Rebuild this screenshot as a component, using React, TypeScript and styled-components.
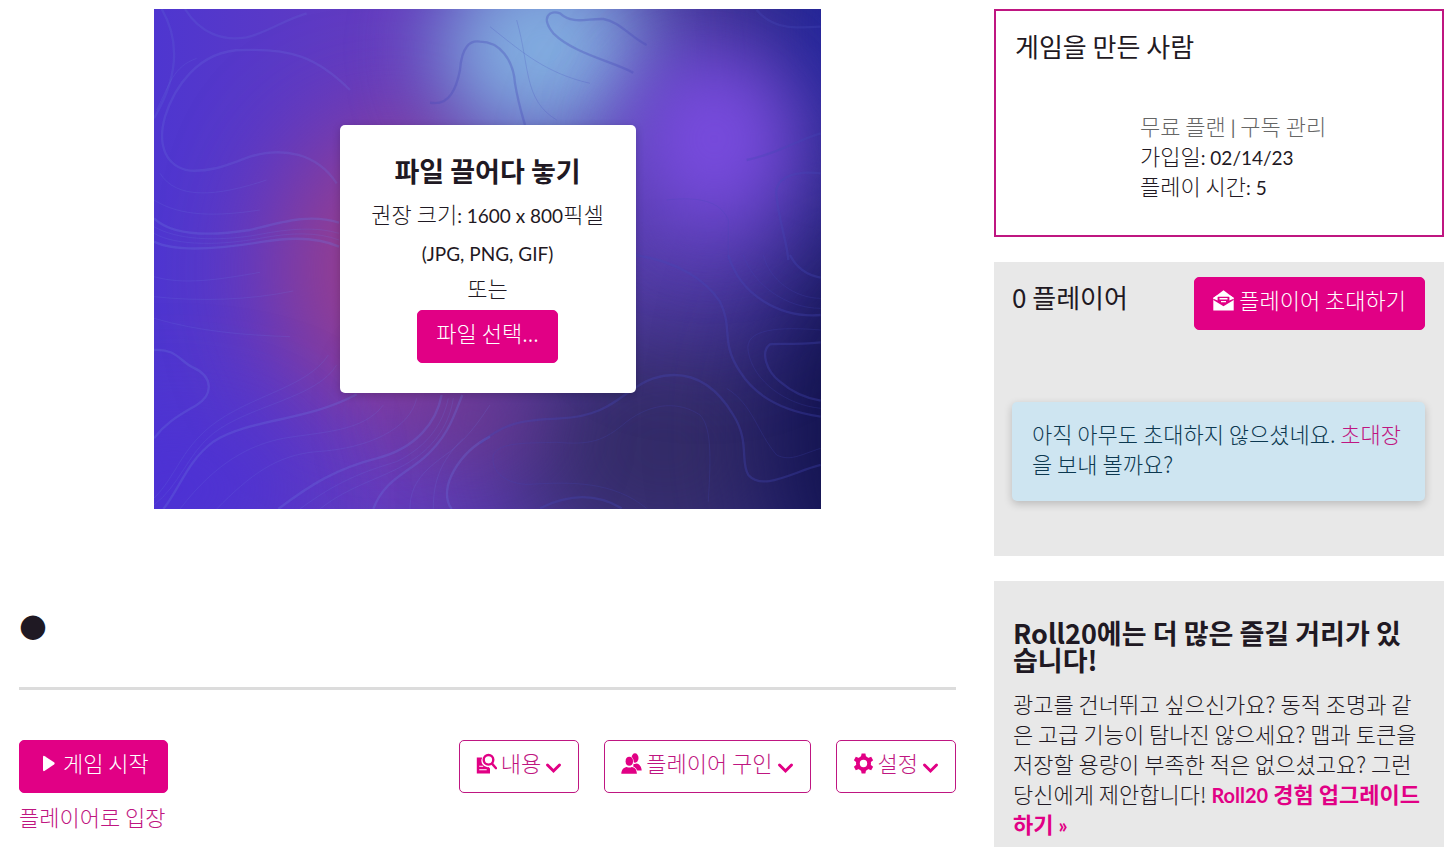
import React from 'react';
import styled, { createGlobalStyle, css } from 'styled-components';

const PINK = '#e10085';
const LINE = '#bf1681';
const INK = '#1f1923';

const GlobalStyle = createGlobalStyle`
  *, *::before, *::after { box-sizing: border-box; }
  body {
    margin: 0;
    background: #fff;
    color: ${INK};
    font-family: "Noto Sans CJK KR", sans-serif;
    font-size: 22px;
    font-weight: 300;
    line-height: 30px;
  }
  h1, h2, h3, p { margin: 0; }
`;

const Page = styled.div`
  display: grid;
  grid-template-columns: minmax(0, 1fr) 450px;
  column-gap: 38px;
  align-items: start;
  padding: 9px 9px 0 19px;
`;

const Latin = styled.span<{ $bold?: boolean }>`
  font-family: Lato, "Noto Sans CJK KR", sans-serif;
  font-size: ${({ $bold }) => ($bold ? 20 : 19)}px;
  font-weight: ${({ $bold }) => ($bold ? 700 : 400)};
  line-height: 1;
`;

const Main = styled.main`
  display: flex;
  flex-direction: column;
`;

const Hero = styled.section`
  display: grid;
  place-items: center;
  width: 100%;
  max-width: 667px;
  min-height: 500px;
  margin: 0 auto;
  overflow: hidden;
  background: #4d30d0;

  & > * { grid-area: 1 / 1; }
`;

const HeroArt = styled.svg`
  display: block;
  width: 100%;
  height: 500px;
`;

const DropCard = styled.div`
  position: relative;
  display: flex;
  flex-direction: column;
  align-items: center;
  width: 296px;
  padding: 28px 16px 30px;
  border-radius: 5px;
  background: #fff;
  box-shadow: 0 2px 8px rgba(0, 0, 0, 0.2);
  text-align: center;
`;

const DropTitle = styled.h2`
  font-size: 27px;
  font-weight: 700;
  line-height: 36px;
  margin-bottom: 5px;
`;

const DropHint = styled.p`
  height: 38px;
  line-height: 38px;
  white-space: nowrap;
`;

const DropOr = styled.p`
  margin-bottom: 6px;
  line-height: 34px;
`;

const buttonBase = css`
  display: inline-flex;
  align-items: center;
  height: 53px;
  padding: 0 18px 10px;
  border: 1px solid ${PINK};
  border-radius: 5px;
  font: inherit;
  white-space: nowrap;
  cursor: pointer;
`;

const SolidButton = styled.button`
  ${buttonBase}
  gap: 5px;
  background: ${PINK};
  color: #fff;
`;

const OutlineButton = styled.button`
  ${buttonBase}
  gap: 4px;
  padding: 0 16px 10px;
  border-color: ${LINE};
  background: #fff;
  color: ${LINE};
`;

const Icon = styled.svg<{ $w?: number }>`
  flex: none;
  display: block;
  width: ${({ $w }) => $w ?? 21}px;
  height: 21px;
  margin-top: 4px;
  fill: ${({ color }) => color ?? 'currentColor'};
`;

const Chevron = styled.svg`
  flex: none;
  align-self: flex-end;
  width: 17px;
  height: 12px;
  margin-bottom: 8px;
  fill: none;
  stroke: ${PINK};
  stroke-width: 3;
  stroke-linecap: round;
`;

const GameTitle = styled.h1`
  margin-top: 86px;
  padding-bottom: 32px;
  border-bottom: 3px solid #dcdcdc;
  font-family: "DejaVu Sans", sans-serif;
  font-size: 32px;
  line-height: 60px;
`;

const Toolbar = styled.div`
  display: flex;
  justify-content: space-between;
  align-items: flex-start;
  margin-top: 50px;
`;

const LaunchGroup = styled.div`
  display: flex;
  flex-direction: column;
  align-items: flex-start;
  gap: 8px;
`;

const MenuGroup = styled.div`
  display: flex;
  gap: 25px;
`;

const PinkLink = styled.a<{ $strong?: boolean }>`
  color: ${({ $strong }) => ($strong ? PINK : LINE)};
  font-weight: ${({ $strong }) => ($strong ? 700 : 'inherit')};
  text-decoration: none;
`;

const Sidebar = styled.aside`
  display: flex;
  flex-direction: column;
  gap: 25px;
`;

const OwnerPanel = styled.section`
  min-height: 228px;
  padding: 17px 19px;
  border: 2px solid ${LINE};
`;

const PanelTitle = styled.h2`
  font-size: 26px;
  font-weight: 400;
  line-height: 36px;
`;

const OwnerFacts = styled.div`
  margin: 46px 0 0 125px;
`;

const Plan = styled.p`
  color: #666;

  a { color: inherit; text-decoration: none; }
`;

const GreyPanel = styled.section`
  padding: 15px 19px 55px 18px;
  background: #e8e8e8;
`;

const PlayersHead = styled.div`
  display: flex;
  justify-content: space-between;
  align-items: flex-start;

  h2 { margin-top: 2px; }
`;

const Notice = styled.p`
  margin-top: 72px;
  min-height: 99px;
  padding: 16px 20px 23px;
  border-radius: 5px;
  background: #cee5f1;
  box-shadow: 0 3px 8px rgba(0, 0, 0, 0.2);
  color: #0c3850;
`;

const PromoPanel = styled.section`
  padding: 38px 19px 9px;
  background: #e8e8e8;
`;

const PromoTitle = styled.h3`
  margin-bottom: 15px;
  font-size: 27px;
  font-weight: 700;
  line-height: 27px;
`;

function Backdrop() {
  return (
    <HeroArt viewBox="0 0 667 500" preserveAspectRatio="xMidYMid slice" aria-hidden="true">
      <defs>
        <linearGradient id="base" x1="0" y1="0" x2="1" y2="0">
          <stop offset="0" stopColor="#4e36d0" />
          <stop offset="0.35" stopColor="#643cbe" />
          <stop offset="0.7" stopColor="#503ca4" />
          <stop offset="1" stopColor="#282884" />
        </linearGradient>
        <filter id="wide" filterUnits="userSpaceOnUse" x="-300" y="-300" width="1300" height="1100" colorInterpolationFilters="sRGB">
          <feGaussianBlur stdDeviation="54" />
        </filter>
        <filter id="soft" filterUnits="userSpaceOnUse" x="-300" y="-300" width="1300" height="1100" colorInterpolationFilters="sRGB">
          <feGaussianBlur stdDeviation="42" />
        </filter>
      </defs>
      <rect width="667" height="500" fill="url(#base)" />
      <ellipse cx="235" cy="260" rx="110" ry="140" fill="#983e8c" filter="url(#wide)" />
      <ellipse cx="510" cy="440" rx="150" ry="125" fill="#342c68" filter="url(#wide)" />
      <ellipse cx="320" cy="410" rx="75" ry="40" fill="#703a88" fillOpacity="0.8" filter="url(#soft)" />
      <ellipse cx="715" cy="420" rx="100" ry="190" fill="#12124c" filter="url(#wide)" />
      <ellipse cx="700" cy="20" rx="60" ry="110" fill="#2426a0" filter="url(#soft)" />
      <ellipse cx="390" cy="40" rx="105" ry="95" fill="#82aee0" filter="url(#soft)" />
      <ellipse cx="550" cy="190" rx="100" ry="130" fill="#6a46c4" fillOpacity="0.5" filter="url(#wide)" />
      <ellipse cx="560" cy="130" rx="80" ry="90" fill="#7a4ce0" filter="url(#soft)" />
      <ellipse cx="20" cy="480" rx="120" ry="60" fill="#4c30d6" filter="url(#wide)" />
      <g fill="none" stroke="#6c78e0" strokeOpacity="0.28" strokeWidth="7">
        <g transform="translate(-4 -9) scale(.3333)">
          <path strokeOpacity="0.18" d="M35 27C95 130 80 240 12 355M105 27C150 100 220 125 290 112C360 95 400 60 470 40" />
          <path strokeOpacity="0.22" d="M560 550C500 460 400 440 300 470C230 495 190 515 120 512C50 500 20 440 45 350C70 270 140 150 280 150C420 145 500 170 600 270" />
          <path d="M12 655C60 700 160 712 300 690C400 665 480 640 567 668M12 725C80 760 220 745 340 725C420 712 500 710 567 740" />
          <path strokeWidth="2" d="M12 680C80 720 200 725 320 705C420 685 500 680 567 700M12 700C80 740 220 735 330 715C420 698 500 695 567 720M30 520C80 600 200 590 350 540M12 600C90 650 200 650 330 630M20 330C60 250 70 200 140 175" />
        </g>
        <g transform="translate(-4 246) scale(.3333)">
          <path d="M12 285C80 280 90 320 130 338C190 365 190 420 140 450C90 480 50 500 12 550M40 762C90 700 110 620 190 560C300 490 470 500 620 418" />
          <path d="M385 762C480 690 560 640 680 610C800 580 860 500 875 420M670 762C700 680 760 660 820 610C890 550 910 490 937 420M1020 545C930 590 860 700 905 762" />
          <path strokeWidth="2" d="M90 762C200 620 300 570 400 550C520 530 640 530 700 450M200 762C300 660 380 600 500 590C660 580 780 520 800 430M12 750C90 690 110 600 190 535C300 450 500 430 560 330M12 730C80 660 90 590 180 515C300 420 470 400 535 300M450 762C560 680 640 650 740 620C840 570 880 500 895 430M510 762C600 690 700 670 780 620C860 570 900 500 910 430M780 762C780 680 830 640 900 590C950 550 980 510 1020 450M850 762C850 680 870 620 940 550M12 65C100 90 200 75 330 52M12 125C150 140 300 135 430 108M12 190C150 230 280 240 420 245" />
        </g>
      </g>
      <g fill="none" stroke="#4448b8" strokeOpacity="0.32" strokeWidth="7">
        <g transform="translate(326 -9) scale(.3333)">
          <path d="M-150 308C-90 320 -70 260 -60 210C-55 140 -30 120 0 125C60 125 100 180 105 250C115 310 125 340 135 375" />
          <path d="M460 218C400 185 280 160 220 100C180 50 210 30 240 40C280 75 320 55 370 57C420 65 450 110 500 135" />
          <path d="M830 30C880 90 950 85 1022 80M1022 520C930 510 880 540 890 590C900 680 920 720 925 780M1022 400C950 420 900 460 800 480" />
          <path strokeWidth="2" d="M110 60C150 200 130 300 230 360M30 80C130 160 200 220 330 250M745 780V660C720 600 650 590 560 600" />
        </g>
        <g transform="translate(326 246) scale(.3333)">
          <path d="M0 565C80 500 130 495 240 490C400 485 430 400 520 370C620 340 700 380 760 480C810 560 780 620 805 660C850 710 940 650 1022 630" />
          <path d="M465 0C600 20 680 80 720 140C760 220 720 260 780 350C830 430 920 470 1022 485M745 0C780 120 900 190 1022 180M930 0C950 40 980 60 1022 68" />
          <path d="M1022 262C940 270 900 265 870 268C840 290 860 350 900 380C940 415 980 430 1022 437M180 760C270 715 350 715 425 760" />
          <path strokeWidth="2" d="M440 500C520 440 600 440 660 480C700 520 690 640 685 740M440 500C370 560 330 570 230 562C140 565 60 560 40 600C30 650 80 690 150 688C280 680 400 680 500 760M1022 580C960 600 930 620 890 600C830 530 820 450 740 400M1022 225C900 215 790 220 805 290C820 380 920 450 1022 460M790 0C820 90 920 160 1022 160M850 0C870 80 950 130 1022 130" />
        </g>
      </g>
    </HeroArt>
  );
}

function PlayIcon() {
  return (
    <Icon $w={20} viewBox="0 0 20 21" aria-hidden="true">
      <path d="M5 4.200Q5 2.200 6.800 3.200L16 9.300Q17.300 10.400 16 11.500L6.800 17.800Q5 18.800 5 16.800Z" />
    </Icon>
  );
}

function ContentIcon() {
  return (
    <Icon viewBox="0 0 21 21" color={PINK} aria-hidden="true">
      <path d="M.8 4.500h5.500a6.400 6.400 0 0 0 6.300 9.600l1.400 1.500v5H.8z" />
      <path d="M3.200 13.200h4M3.200 16.700h7.500" fill="none" stroke="#fff" strokeWidth="1.100" />
      <circle cx="12.500" cy="6.800" r="6.600" fill="#fff" />
      <circle cx="12.500" cy="6.800" r="4.800" fill="none" stroke={PINK} strokeWidth="2.400" />
      <path d="m16 10.600 4 4.600" fill="none" stroke={PINK} strokeWidth="2.400" strokeLinecap="round" />
    </Icon>
  );
}

function PeopleIcon() {
  return (
    <Icon viewBox="0 0 21 21" color={PINK} aria-hidden="true">
      <ellipse cx="14" cy="5" rx="3.500" ry="4.700" />
      <path d="M12.500 10.800c.8.400 2 .4 3-.2 3.200.6 5 3.400 5.200 7H12z" />
      <g stroke="#fff" strokeWidth="1.400" paintOrder="stroke">
        <ellipse cx="8.300" cy="8.300" rx="3.700" ry="4.500" />
        <path d="M.3 20.700c.1-3.800 2.300-6.500 5.500-6.800 1.500.8 3.500.8 5 0 3.200.3 5 3 5.100 6.800z" />
      </g>
    </Icon>
  );
}

function GearIcon() {
  const teeth = [0, 60, 120, 180, 240, 300];
  return (
    <Icon viewBox="0 0 21 21" color={PINK} aria-hidden="true">
      <circle cx="10.500" cy="10.500" r="5.600" fill="none" stroke={PINK} strokeWidth="3.800" />
      {teeth.map((angle) => (
        <path key={angle} d="M8.600.5h3.800l.8 4H7.800z" transform={`rotate(${angle} 10.500 10.500)`} />
      ))}
    </Icon>
  );
}

function EnvelopeIcon() {
  return (
    <Icon viewBox="0 0 21 21" aria-hidden="true">
      <path d="M10.500.3 20.700 8v12.500H.3V8z" />
      <path d="M.3 8.800 5 6.800h11l4.700 2v1.300l-10.200 6.100L.3 10.100z" fill={PINK} />
      <path d="M.3 7.800 4.600 5v5.600L.3 8.800zM20.700 7.800 16.400 5v5.600l4.300-1.800z" />
      <path d="M6.500 8h8v1.400h-8zM8 10.900h5v1.400H8z" />
    </Icon>
  );
}

function DownMark() {
  return (
    <Chevron viewBox="0 0 17 12" aria-hidden="true">
      <path d="M2.500 3 8.500 9l6-6" />
    </Chevron>
  );
}

export default function App() {
  return (
    <>
      <GlobalStyle />
      <Page>
        <Main>
          <Hero>
            <Backdrop />
            <DropCard>
              <DropTitle>파일 끌어다 놓기</DropTitle>
              <DropHint>
                권장 크기<Latin>: 1600 x 800</Latin>픽셀
              </DropHint>
              <DropHint>
                <Latin>(JPG, PNG, GIF)</Latin>
              </DropHint>
              <DropOr>또는</DropOr>
              <SolidButton type="button">파일 선택...</SolidButton>
            </DropCard>
          </Hero>

          <GameTitle>●</GameTitle>

          <Toolbar>
            <LaunchGroup>
              <SolidButton type="button">
                <PlayIcon />
                게임 시작
              </SolidButton>
              <PinkLink href="#join">플레이어로 입장</PinkLink>
            </LaunchGroup>
            <MenuGroup>
              <OutlineButton type="button">
                <ContentIcon />
                내용
                <DownMark />
              </OutlineButton>
              <OutlineButton type="button">
                <PeopleIcon />
                플레이어 구인
                <DownMark />
              </OutlineButton>
              <OutlineButton type="button">
                <GearIcon />
                설정
                <DownMark />
              </OutlineButton>
            </MenuGroup>
          </Toolbar>
        </Main>

        <Sidebar>
          <OwnerPanel>
            <PanelTitle>게임을 만든 사람</PanelTitle>
            <OwnerFacts>
              <Plan>
                무료 플랜 <Latin>|</Latin> <a href="#subscription">구독 관리</a>
              </Plan>
              <p>
                가입일<Latin>: 02/14/23</Latin>
              </p>
              <p>
                플레이 시간<Latin>: 5</Latin>
              </p>
            </OwnerFacts>
          </OwnerPanel>

          <GreyPanel>
            <PlayersHead>
              <PanelTitle>0 플레이어</PanelTitle>
              <SolidButton type="button">
                <EnvelopeIcon />
                플레이어 초대하기
              </SolidButton>
            </PlayersHead>
            <Notice>
              아직 아무도 초대하지 않으셨네요. <PinkLink href="#invite">초대장</PinkLink>을 보내 볼까요?
            </Notice>
          </GreyPanel>

          <PromoPanel>
            <PromoTitle>Roll20에는 더 많은 즐길 거리가 있습니다!</PromoTitle>
            <p>
              광고를 건너뛰고 싶으신가요? 동적 조명과 같은 고급 기능이 탐나진 않으세요? 맵과 토큰을 저장할
              용량이 부족한 적은 없으셨고요? 그런 당신에게 제안합니다!{' '}
              <PinkLink $strong href="#upgrade">
                <Latin $bold>Roll20</Latin> 경험 업그레이드하기 <Latin $bold>»</Latin>
              </PinkLink>
            </p>
          </PromoPanel>
        </Sidebar>
      </Page>
    </>
  );
}
